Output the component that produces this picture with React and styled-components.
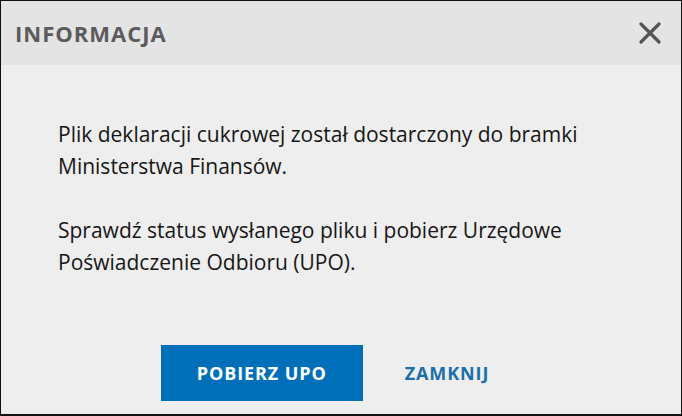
import React from 'react';
import styled, { createGlobalStyle } from 'styled-components';

const GlobalStyle = createGlobalStyle`
  * {
    box-sizing: border-box;
  }
  html, body {
    margin: 0;
    padding: 0;
    background: #fff;
  }
  body {
    font-family: 'Open Sans', 'Noto Sans', sans-serif;
  }
`;

const Dialog = styled.div`
  width: 682px;
  height: 416px;
  display: flex;
  flex-direction: column;
  background: #eeeeee;
  border: 1px solid #111;
  border-bottom-width: 2px;
  overflow: hidden;
`;

const DialogHeader = styled.div`
  height: 64px;
  flex-shrink: 0;
  display: flex;
  align-items: center;
  justify-content: space-between;
  padding: 0 19px 0 14px;
  background: #e4e4e4;
`;

const DialogTitle = styled.h2`
  margin: 0;
  font-size: 22px;
  font-weight: 700;
  letter-spacing: 1px;
  color: #5b5b5b;
`;

const CloseButton = styled.button`
  width: 24px;
  height: 24px;
  padding: 0;
  border: 0;
  background: transparent;
  display: flex;
  align-items: center;
  justify-content: center;
  cursor: pointer;
`;

const DialogBody = styled.div`
  flex: 1;
  padding: 53px 58px 0 57px;
`;

const Paragraph = styled.p`
  margin: 0 0 32px 0;
  font-size: 21px;
  line-height: 32px;
  color: #161616;
`;

const DialogFooter = styled.div`
  display: flex;
  justify-content: center;
  align-items: center;
  gap: 22px;
  padding-bottom: 13px;
`;

const Button = styled.button`
  height: 56px;
  border: 0;
  font-family: inherit;
  font-size: 18px;
  font-weight: 700;
  letter-spacing: 0.9px;
  cursor: pointer;
  width: ${props => (props.primary ? '202px' : 'auto')};
  padding: ${props => (props.primary ? '0' : '0 32px 0 20px')};
  background: ${props => (props.primary ? '#006fba' : 'transparent')};
  color: ${props => (props.primary ? '#ffffff' : '#1a6eaa')};
`;

const CloseIcon = () => (
  <svg width="22" height="22" viewBox="0 0 22 22">
    <path
      d="M2 2 L20 20 M20 2 L2 20"
      stroke="#555"
      strokeWidth="3.2"
      strokeLinecap="round"
      fill="none"
    />
  </svg>
);

export default function App() {
  return (
    <>
      <GlobalStyle />
      <Dialog>
        <DialogHeader>
          <DialogTitle>INFORMACJA</DialogTitle>
          <CloseButton aria-label="Zamknij">
            <CloseIcon />
          </CloseButton>
        </DialogHeader>
        <DialogBody>
          <Paragraph>
            Plik deklaracji cukrowej został dostarczony do bramki Ministerstwa
            Finansów.
          </Paragraph>
          <Paragraph>
            Sprawdź status wysłanego pliku i pobierz Urzędowe Poświadczenie
            Odbioru (UPO).
          </Paragraph>
        </DialogBody>
        <DialogFooter>
          <Button primary>POBIERZ UPO</Button>
          <Button>ZAMKNIJ</Button>
        </DialogFooter>
      </Dialog>
    </>
  );
}
